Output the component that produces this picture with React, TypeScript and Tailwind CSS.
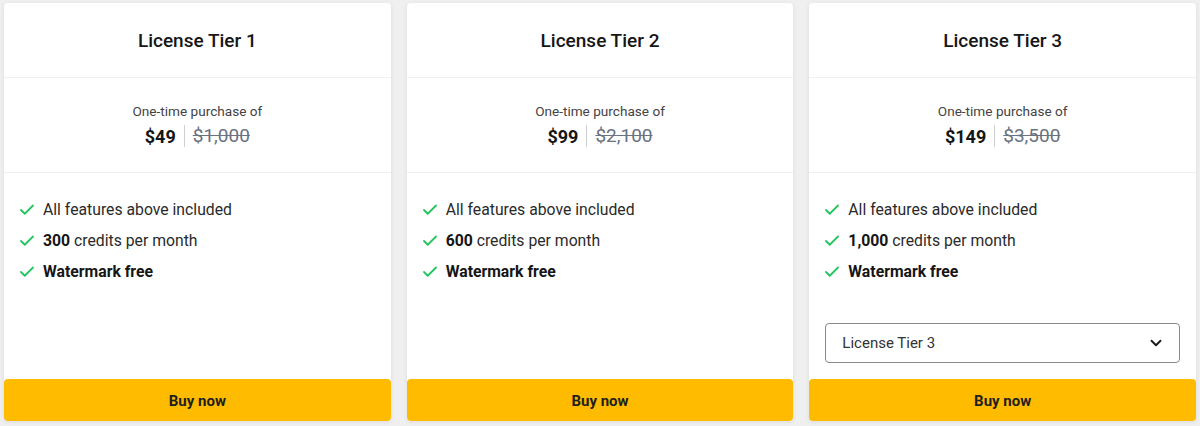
import { Check, ChevronDown } from 'lucide-react'

type Tier = {
  name: string
  price: string
  oldPrice: string
  credits: string
  select?: boolean
}

const tiers: Tier[] = [
  { name: 'License Tier 1', price: '$49', oldPrice: '$1,000', credits: '300' },
  { name: 'License Tier 2', price: '$99', oldPrice: '$2,100', credits: '600' },
  { name: 'License Tier 3', price: '$149', oldPrice: '$3,500', credits: '1,000', select: true },
]

const Feature = ({ children }: { children: React.ReactNode }) => (
  <li className="flex h-[31px] items-center gap-[7px]">
    <Check className="h-[18px] w-[18px] text-[#22c55e]" strokeWidth={2.4} aria-hidden="true" />
    <span className="text-[15.75px] text-[#2a2a2a]">{children}</span>
  </li>
)

const TierCard = ({ tier }: { tier: Tier }) => (
  <div className="flex h-[418px] flex-1 flex-col rounded-[4px] bg-white shadow-[0_1px_4px_rgba(0,0,0,0.08)]">
    <div className="flex h-[75px] items-center justify-center border-b border-[#f1f1f1] pt-[2px]">
      <h3 className="text-[19px] font-medium text-[#161616]">{tier.name}</h3>
    </div>
    <div className="flex h-[95px] flex-col items-center justify-center border-b border-[#f1f1f1] pt-[2px]">
      <p className="text-[13.6px] leading-[18px] text-[#444]">One-time purchase of</p>
      <div className="mt-[2px] flex items-center">
        <span className="text-[18px] font-bold text-[#161616]">{tier.price}</span>
        <span className="mx-[8px] h-[22px] w-px bg-[#cfcfcf]" />
        <span className="text-[19px] text-[#6b7280] line-through">{tier.oldPrice}</span>
      </div>
    </div>
    <ul className="pl-[14px] pr-[16px] pt-[21px]">
      <Feature>All features above included</Feature>
      <Feature>
        <b className="font-bold text-[#161616]">{tier.credits}</b> credits per month
      </Feature>
      <Feature>
        <b className="font-bold text-[#161616]">Watermark free</b>
      </Feature>
    </ul>
    <div className="mt-auto">
      {tier.select && (
        <div className="px-[16px] pb-[16px]">
          <button
            type="button"
            className="flex h-[40px] w-full items-center justify-between rounded-[4px] border border-[#8a8a8a] bg-white pl-[16px] pr-[14px] text-[15px] text-[#333]"
          >
            License Tier 3
            <ChevronDown className="h-[18px] w-[18px] text-[#1a1a1a]" strokeWidth={2.5} />
          </button>
        </div>
      )}
      <button
        type="button"
        className="flex h-[42px] w-full items-center justify-center rounded-[4px] bg-[#ffbb00] pt-[2px] text-[15px] font-bold text-[#1e1e1e]"
      >
        Buy now
      </button>
    </div>
  </div>
)

export default function App() {
  return (
    <div className="min-h-[426px] w-full bg-[#efefef] px-[4px] pt-[3px] font-['Roboto',sans-serif]">
      <div className="flex gap-[16px]">
        {tiers.map((t) => (
          <TierCard key={t.name} tier={t} />
        ))}
      </div>
    </div>
  )
}
